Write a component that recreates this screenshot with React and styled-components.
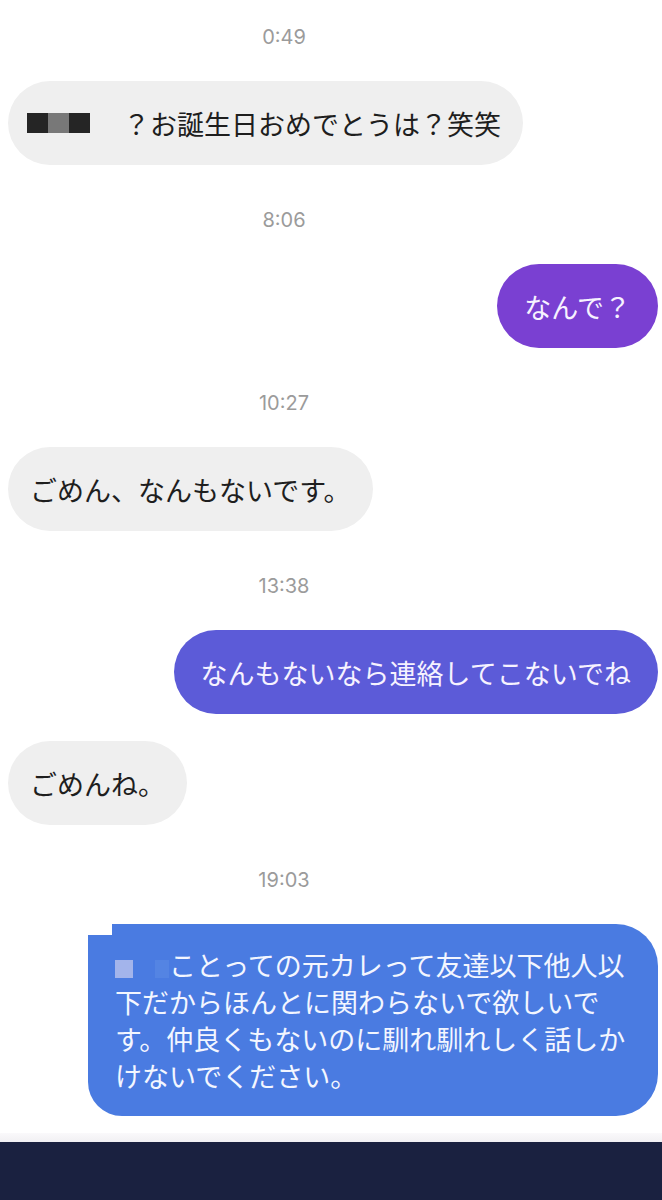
import styled, { createGlobalStyle } from "styled-components"

const GlobalStyle = createGlobalStyle`
  html, body {
    margin: 0;
    padding: 0;
    background: #ffffff;
  }
  * {
    box-sizing: border-box;
  }
`

const messages = [
  { time: "0:49" },
  { from: "them", text: "？お誕生日おめでとうは？笑笑", censored: true },
  { time: "8:06" },
  { from: "me", text: "なんで？", color: "#7a40d2" },
  { time: "10:27" },
  { from: "them", text: "ごめん、なんもないです。" },
  { time: "13:38" },
  { from: "me", text: "なんもないなら連絡してこないでね", color: "#5c5bd8" },
  { from: "them", text: "ごめんね。" },
  { time: "19:03" },
]

export default function App() {
  return <Page>
    <GlobalStyle />
    <Thread>
      {messages.map((m, i) => {
        if (m.time) return <Timestamp key={i}>{m.time}</Timestamp>
        const mine = m.from === "me"
        return <Row key={i} $mine={mine}>
          <Bubble $mine={mine} $color={m.color}>
            {m.censored && <NameBlur><span /><span /><span /></NameBlur>}
            {m.text}
          </Bubble>
        </Row>
      })}
      <Row $mine>
        <LongBubble>
          <InlineBlur><i /><b /></InlineBlur>ことっての元カレって友達以下他人以下だからほんとに関わらないで欲しいです。仲良くもないのに馴れ馴れしく話しかけないでください。
        </LongBubble>
      </Row>
    </Thread>
    <BottomBar>
      <Shade />
      <Navy />
    </BottomBar>
  </Page>
}

const Page = styled.div`
  width: 662px;
  height: 1200px;
  overflow: hidden;
  display: flex;
  flex-direction: column;
  background: #ffffff;
  font-family: "Noto Sans CJK JP", "Noto Sans", sans-serif;
`

const Thread = styled.div`
  flex: 1;
  display: flex;
  flex-direction: column;
  padding-top: 25px;
`

const Timestamp = styled.div`
  padding-right: 94px;
  margin: 43px 0 32px;
  text-align: center;
  font-family: Inter, "Liberation Sans", sans-serif;
  font-size: 20px;
  line-height: 24px;
  color: #9b9b9b;
  &:first-child {
    margin-top: 0;
  }
`

const Row = styled.div`
  display: flex;
  justify-content: ${p => (p.$mine ? "flex-end" : "flex-start")};
  padding: 0 4px 0 8px;
  & + & {
    margin-top: 27px;
  }
`

const Bubble = styled.div`
  display: flex;
  align-items: center;
  height: 84px;
  padding: 0 ${p => (p.$mine ? "27px" : "22px")};
  border-radius: 42px;
  background: ${p => p.$color || "#efefef"};
  color: ${p => (p.$mine ? "#f6f2ff" : "#1e1e1e")};
  font-size: 27px;
  line-height: 37px;
  white-space: nowrap;
`

const NameBlur = styled.span`
  display: inline-flex;
  margin-left: -3px;
  margin-right: 33px;
  span {
    width: 21px;
    height: 20px;
    background: #252525;
  }
  span:nth-child(2) {
    background: #787878;
  }
`

const LongBubble = styled.div`
  position: relative;
  max-width: 570px;
  padding: 22px 27px 22px 27px;
  border-radius: 0 42px 42px 34px;
  background: #4a7be1;
  color: #f3f6ff;
  font-size: 27px;
  line-height: 37px;
  line-break: strict;
  &::before {
    content: "";
    position: absolute;
    left: 0;
    top: 0;
    width: 24px;
    height: 11px;
    background: #ffffff;
  }
`

const InlineBlur = styled.span`
  display: inline-flex;
  align-items: center;
  gap: 22px;
  width: 54px;
  height: 20px;
  vertical-align: -2px;
  i {
    width: 20px;
    height: 18px;
    background: #a3b4eb;
  }
  b {
    width: 16px;
    height: 18px;
    background: #5484e3;
  }
`

const BottomBar = styled.div`
  display: flex;
  flex-direction: column;
`

const Shade = styled.div`
  height: 9px;
  background: linear-gradient(#faf9fb, #f1f0f3);
`

const Navy = styled.div`
  height: 58px;
  background: #1a2140;
`
